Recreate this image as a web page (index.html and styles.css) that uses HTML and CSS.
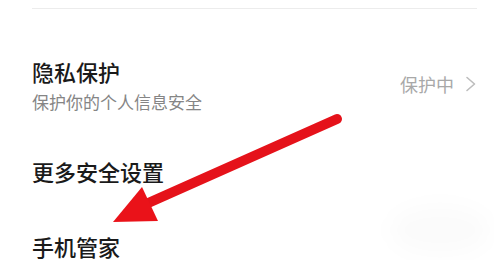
FILE: index.html
```html
<!DOCTYPE html>
<html lang="zh-CN">
<head>
<meta charset="utf-8">
<link rel="stylesheet" href="styles.css">
</head>
<body>
<div class="page">
  <div class="divider"></div>
  <div class="row row-privacy">
    <div class="texts">
      <div class="title">隐私保护</div>
      <div class="sub">保护你的个人信息安全</div>
    </div>
    <div class="status">
      <span>保护中</span>
      <svg class="chev" width="12" height="16" viewBox="0 0 12 16"><path d="M2 1.5 L9.5 8 L2 14.5" fill="none" stroke="#bdbdbd" stroke-width="1.6" stroke-linecap="round" stroke-linejoin="round"/></svg>
    </div>
  </div>
  <div class="row row-more">
    <div class="title">更多安全设置</div>
  </div>
  <div class="row row-manager">
    <div class="title">手机管家</div>
  </div>
  <div class="smudge"></div>
  <svg class="arrow" width="494" height="260" viewBox="0 0 494 260">
    <line x1="337" y1="119" x2="146" y2="204" stroke="#e5121a" stroke-width="10" stroke-linecap="round"/>
    <polygon points="113,222 142,187 158,221" fill="#ea1219"/>
  </svg>
</div>
</body>
</html>
```

FILE: styles.css
```css
html, body {
  margin: 0;
  padding: 0;
  background: #ffffff;
}
body {
  font-family: "Noto Sans CJK SC", "Noto Sans", sans-serif;
  width: 494px;
  height: 260px;
  overflow: hidden;
}
.page {
  position: relative;
  width: 494px;
  height: 260px;
  padding: 8px 17px 0 32px;
  box-sizing: border-box;
}
.divider {
  height: 1px;
  background: #ececec;
}
.row {
  display: flex;
  align-items: center;
  justify-content: space-between;
}
.row-privacy {
  margin-top: 48px;
}
.row-more {
  margin-top: 44px;
}
.row-manager {
  margin-top: 47px;
}
.texts {
  display: flex;
  flex-direction: column;
  gap: 6px;
}
.title {
  font-size: 22px;
  line-height: 28px;
  font-weight: 500;
  color: #1a1a1a;
}
.sub {
  font-size: 17px;
  line-height: 22px;
  color: #858585;
}
.status {
  display: flex;
  align-items: center;
  gap: 11px;
  font-size: 18px;
  line-height: 24px;
  color: #a8a8a8;
  margin-top: -3px;
}
.chev {
  display: block;
}
.smudge {
  position: absolute;
  left: 390px;
  top: 205px;
  width: 100px;
  height: 50px;
  border-radius: 50%;
  background: rgba(0, 0, 0, 0.015);
  filter: blur(10px);
}
.arrow {
  position: absolute;
  left: 0;
  top: 0;
}
```
